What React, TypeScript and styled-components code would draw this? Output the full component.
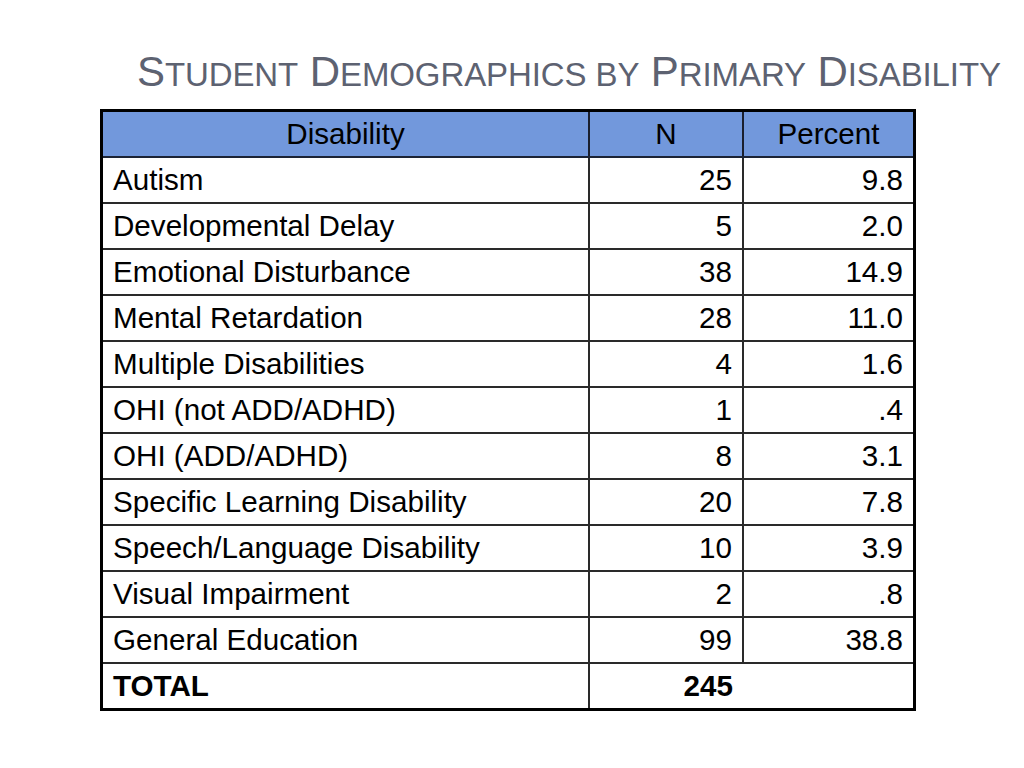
import React from "react";
import styled, { createGlobalStyle } from "styled-components";

const Global = createGlobalStyle`
  html, body { margin: 0; padding: 0; background: #ffffff; }
  body { font-family: "Liberation Sans", Arial, sans-serif; }
`;

const Slide = styled.div`
  width: 1024px;
  height: 768px;
  display: flex;
  flex-direction: column;
  background: #ffffff;
  box-sizing: border-box;
  padding-top: 51px;
`;

const Title = styled.h1`
  margin: 0 0 16px 137px;
  font-family: "Liberation Sans", Arial, sans-serif;
  font-weight: normal;
  font-size: 42px;
  line-height: 42px;
  height: 42px;
  color: #5d6271;
  white-space: nowrap;
  letter-spacing: -0.1px;
`;

const Small = styled.span`
  font-size: 33px;
`;

const Table = styled.table`
  margin-left: 100px;
  width: 806px;
  border-collapse: collapse;
  border: 3px solid #000;
  font-family: "Liberation Sans", Arial, sans-serif;
  font-size: 29.6px;
  color: #000;
  table-layout: fixed;
`;

const HeadCell = styled.th<{ $w: number }>`
  width: ${(p) => p.$w}px;
  height: 44px;
  background: #7298dc;
  font-weight: normal;
  text-align: center;
  padding: 0;
  border-left: 2px solid #1a1f2e;
  border-bottom: 2px solid #1c2436;
  &:first-child { border-left: none; }
`;

const Cell = styled.td<{ $align?: string; $bold?: boolean; $noLeft?: boolean }>`
  height: 44px;
  padding: 0 10px 0 10px;
  text-align: ${(p) => p.$align || "left"};
  font-weight: ${(p) => (p.$bold ? "bold" : "normal")};
  border-top: 2px solid #2a2a2a;
  border-left: ${(p) => (p.$noLeft ? "none" : "2px solid #2a2a2a")};
  white-space: nowrap;
  &:first-child { border-left: none; }
`;

const rows: [string, string, string][] = [
  ["Autism", "25", "9.8"],
  ["Developmental Delay", "5", "2.0"],
  ["Emotional Disturbance", "38", "14.9"],
  ["Mental Retardation", "28", "11.0"],
  ["Multiple Disabilities", "4", "1.6"],
  ["OHI (not ADD/ADHD)", "1", ".4"],
  ["OHI (ADD/ADHD)", "8", "3.1"],
  ["Specific Learning Disability", "20", "7.8"],
  ["Speech/Language Disability", "10", "3.9"],
  ["Visual Impairment", "2", ".8"],
  ["General Education", "99", "38.8"],
];

export default function App() {
  return (
    <>
      <Global />
      <Slide>
        <Title>
          S<Small>TUDENT</Small> D<Small>EMOGRAPHICS BY</Small> P<Small>RIMARY</Small> D
          <Small>ISABILITY</Small>
        </Title>
        <Table>
          <thead>
            <tr>
              <HeadCell $w={485}>Disability</HeadCell>
              <HeadCell $w={152}>N</HeadCell>
              <HeadCell $w={169}>Percent</HeadCell>
            </tr>
          </thead>
          <tbody>
            {rows.map(([d, n, p]) => (
              <tr key={d}>
                <Cell>{d}</Cell>
                <Cell $align="right">{n}</Cell>
                <Cell $align="right">{p}</Cell>
              </tr>
            ))}
            <tr>
              <Cell $bold>TOTAL</Cell>
              <Cell $align="right" $bold>245</Cell>
              <Cell $noLeft></Cell>
            </tr>
          </tbody>
        </Table>
      </Slide>
    </>
  );
}
